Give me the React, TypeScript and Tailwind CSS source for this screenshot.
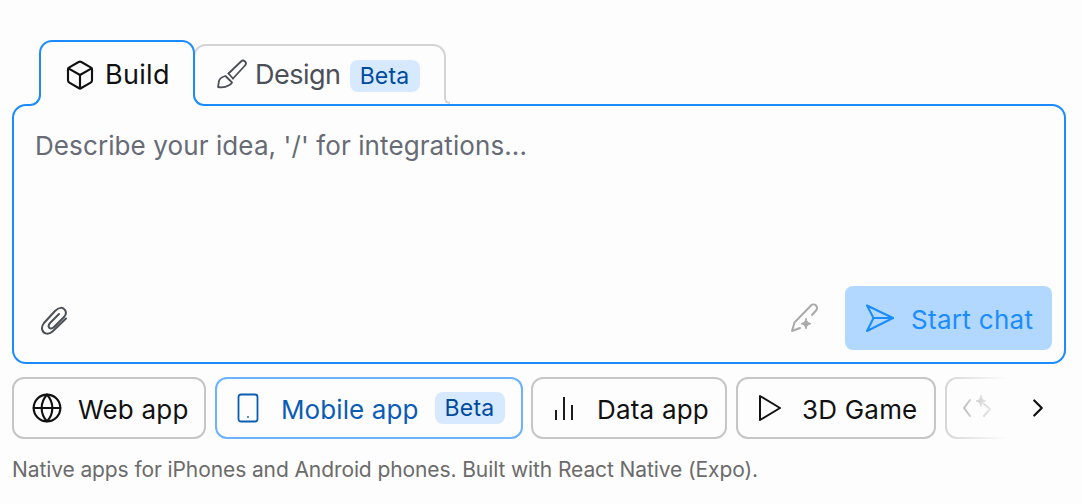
import { Box, ChevronRight, Globe } from "lucide-react";

const font = "font-['Inter','Noto_Sans',sans-serif]";

function Beta({ className }: { className?: string }) {
  return (
    <span className={`flex h-[32px] w-[70px] shrink-0 items-center justify-center rounded-[8px] bg-[#d6e9ff] text-[23px] tracking-[0.2px] text-[#004a9c] ${className ?? ""}`}>
      Beta
    </span>
  );
}

function Chip({ className, children }: { className?: string; children: React.ReactNode }) {
  return (
    <div className={`flex h-[62px] shrink-0 items-center rounded-[12px] border-2 bg-[#fdfdfd] text-[26px] ${className ?? ""}`}>
      {children}
    </div>
  );
}

export default function App() {
  return (
    <div className={`h-[504px] w-[1082px] overflow-hidden bg-[#fdfdfd] px-[12px] pt-[39px] ${font}`}>
      {/* tabs */}
      <div className="relative z-10 flex h-[65px] items-end pl-[27px]">
        <div className="relative z-10 -mb-[2px] flex h-[66px] w-[156px] items-center gap-[9px] rounded-t-[13px] border-2 border-b-0 border-[#1a8cff] bg-[#fdfdfd] pl-[23px] pt-[2px] text-[27px] tracking-[0.3px] text-[#111]">
          <Box size={32} strokeWidth={1.6} className="shrink-0" />
          <span>Build</span>
          {/* hides the straight side borders and the box line under the flares */}
          <div className="absolute -left-[13px] -right-[13px] bottom-0 h-[14px] bg-[#fdfdfd]" />
          <div className="absolute -left-[13px] bottom-0 h-[14px] w-[13px] rounded-br-[11px] border-b-2 border-r-2 border-[#1a8cff]" />
          <div className="absolute -right-[13px] bottom-0 h-[14px] w-[13px] rounded-bl-[11px] border-b-2 border-l-2 border-[#1a8cff]" />
        </div>
        <div className="relative -ml-[2px] flex h-[60px] w-[253px] items-center gap-[9px] rounded-t-[13px] border-2 border-b-0 border-[#d3d3d3] pl-[21px] text-[27px] tracking-[-0.5px] text-[#4b5058]">
          <svg width="32" height="32" viewBox="5 3 32 32" fill="none" stroke="currentColor" strokeWidth="1.8" strokeLinejoin="round" strokeLinecap="round" className="shrink-0">
            <path d="M17.500 17.500 30 5.500a2.800 2.800 0 0 1 4 4L22 22.500" />
            <path d="M17.500 17.500 22 22.500" />
            <path d="M14.500 20c-3.500 1-6 3-6.500 5-.5 2-.5 4-1 6 3 .5 8 0 10.500-1.500 2-1.200 3.500-2.500 3.500-3Z" />
          </svg>
          <span className="-ml-[2px]">Design</span>
          <Beta className="mt-[2px]" />
          <div className="absolute -right-[6px] bottom-0 h-[9px] w-[6px] bg-[#fdfdfd]" />
          <div className="absolute -right-[6px] bottom-0 h-[9px] w-[6px] rounded-bl-[6px] border-b-2 border-l-2 border-[#d3d3d3]" />
        </div>
      </div>

      {/* prompt box */}
      <div className="flex h-[260px] w-[1054px] flex-col justify-between rounded-[14px] border-2 border-[#1a8cff] bg-[#fdfdfd] pb-[12px] pl-[21px] pr-[12px] pt-[22px]">
        <p className="text-[26px] leading-[36px] tracking-[0.1px] text-[#666b75]">Describe your idea, '/' for integrations...</p>
        <div className="flex items-center justify-between">
          <svg className="ml-[3px]" width="34" height="34" viewBox="4 2 34 34" fill="none" stroke="#4b5058" strokeWidth="2" strokeLinecap="round" strokeLinejoin="round">
            <path d="M32 19.500 18.500 32.500C14.500 36 10 35 8.500 31.500 7.500 29 8 26.500 10 24L21 12C25 8 29 8 31 11 32.500 13.500 32 16 30 18L20 28C18 30 15.500 30 14.800 28 14.200 26.500 15 25 16.500 23.500L25 15" />
          </svg>
          <div className="flex items-center gap-[25px]">
            <svg width="30" height="30" viewBox="6 5 30 30" fill="none" stroke="#aaaaaa" strokeWidth="2" strokeLinecap="round" strokeLinejoin="round">
              <path d="M16 30 8 33l2.500-8.500L27 7.500a3.500 3.500 0 0 1 5 5L28 17" />
              <path d="M22 20.500c.6 3 1.600 4.400 5 5.200-3.400.8-4.400 2.200-5 5.200-.6-3-1.600-4.400-5-5.200 3.400-.8 4.400-2.200 5-5.200Z" fill="#aaaaaa" strokeWidth="1" />
            </svg>
            <button className="flex h-[64px] w-[207px] items-center gap-[16px] rounded-[8px] bg-[#b3d8ff] pl-[20px] text-[26px] tracking-[0.3px] text-[#1a8cff]">
              <svg width="30" height="28" viewBox="0 0 30 28" fill="none" stroke="currentColor" strokeWidth="2" strokeLinejoin="round" strokeLinecap="round" className="shrink-0">
                <path d="M2 1.500 28 14 2 27l6.500-13L2 1.500Z" />
                <path d="M8.500 14H28" />
              </svg>
              <span className="pt-[2px]">Start chat</span>
            </button>
          </div>
        </div>
      </div>

      {/* app type chips */}
      <div className="relative mt-[13px] flex w-[1054px] gap-[9px] overflow-hidden">
        <Chip className="w-[194px] gap-[15px] border-[#c4c7c5] pl-[17px] tracking-[0.2px] text-[#111]">
          <Globe size={32} strokeWidth={1.6} className="shrink-0" />
          <span className="pt-[2px]">Web app</span>
        </Chip>
        <Chip className="w-[308px] border-[#6cb2ff] pl-[20px] tracking-[0.1px] text-[#0b5cb5]">
          <svg width="22" height="30" viewBox="0 0 22 30" fill="none" stroke="currentColor" strokeWidth="1.8" className="shrink-0">
            <rect x="1.500" y="1.500" width="19" height="27" rx="2.500" />
            <circle cx="11" cy="24" r="0.9" fill="currentColor" stroke="none" />
          </svg>
          <span className="ml-[22px] mr-[16px] pt-[2px]">Mobile app</span>
          <Beta />
        </Chip>
        <Chip className="-ml-[1px] w-[196px] gap-[23px] border-[#c4c7c5] pl-[21px] tracking-[0.2px] text-[#111]">
          <svg width="20" height="26" viewBox="0 0 20 26" fill="none" stroke="currentColor" strokeWidth="1.9" className="shrink-0">
            <path d="M2 25v-10M10 25V2M18 25V10" />
          </svg>
          <span className="pt-[2px]">Data app</span>
        </Chip>
        <Chip className="w-[200px] gap-[20px] border-[#c4c7c5] pl-[20px] tracking-[0.2px] text-[#111]">
          <svg width="24" height="28" viewBox="0 0 24 28" fill="none" stroke="currentColor" strokeWidth="2" strokeLinejoin="round" className="shrink-0">
            <path d="M2 2 22 14 2 26Z" />
          </svg>
          <span className="pt-[2px]">3D Game</span>
        </Chip>
        <Chip className="w-[200px] border-[#c4c7c5] pl-[15px] text-[#808080]">
          <svg width="30" height="28" viewBox="7 6 30 28" fill="none" stroke="currentColor" strokeWidth="2" strokeLinecap="round" strokeLinejoin="round" className="shrink-0">
            <path d="M15 12 9 20l6 8M29 16l6 5-6 7" />
            <path d="M26 7.500c.5 3.200 1.500 4.700 5 5.500-3.500.8-4.500 2.300-5 5.500-.5-3.200-1.500-4.700-5-5.500 3.500-.8 4.500-2.300 5-5.500Z" fill="currentColor" strokeWidth="0.8" />
          </svg>
        </Chip>
        <div className="absolute right-0 top-0 flex h-[62px] w-[121px] items-center justify-end bg-gradient-to-r from-[#fdfdfd]/30 via-[#fdfdfd] via-[52%] to-[#fdfdfd] pr-[13px] text-[#111]">
          <ChevronRight size={30} strokeWidth={1.8} />
        </div>
      </div>

      <p className="mt-[17px] text-[21px] leading-[28px] tracking-[-0.1px] text-[#6b6b6b]">
        Native apps for iPhones and Android phones. Built with React Native (Expo).
      </p>
    </div>
  );
}
